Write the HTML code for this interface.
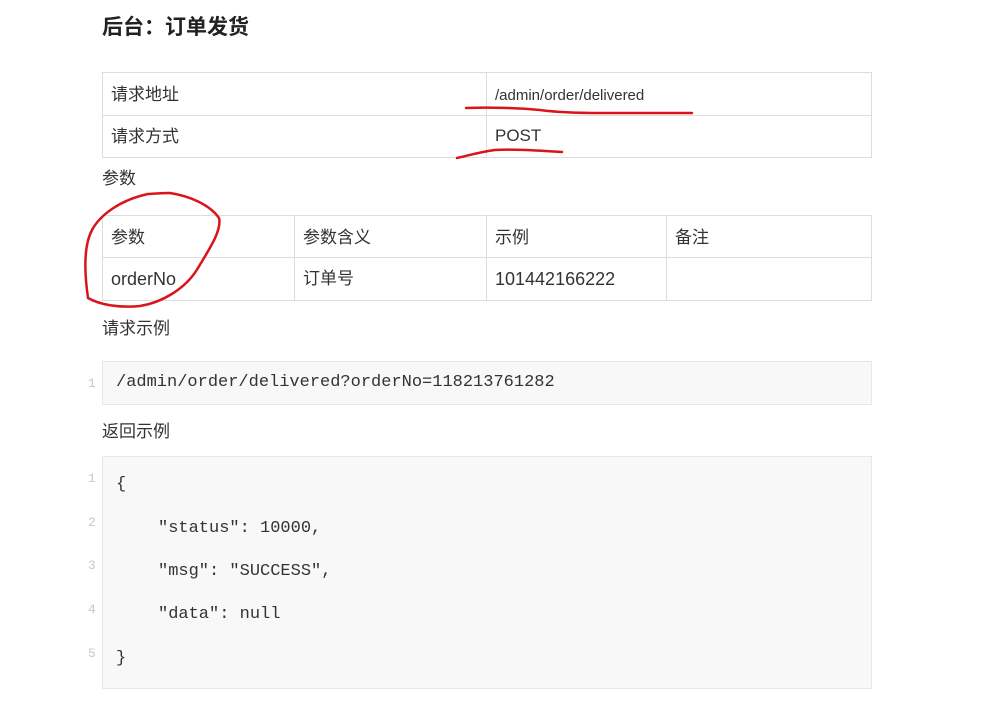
<!DOCTYPE html>
<html><head><meta charset="utf-8"><style>
body{margin:0;width:986px;height:719px;background:#fff;position:relative;overflow:hidden;font-family:"Liberation Sans","Noto Sans CJK SC",sans-serif;color:#333;}
.a{position:absolute;white-space:nowrap;}
.t{font-size:17px;line-height:20px;}
.box{position:absolute;border:1px solid #ddd;box-sizing:border-box;}
.hl{position:absolute;height:1px;background:#ddd;}
.vl{position:absolute;width:1px;background:#ddd;}
.code{position:absolute;background:#f8f8f8;border:1px solid #e7e7e7;box-sizing:border-box;}
.m{font-family:"Liberation Mono","DejaVu Sans Mono",monospace;font-size:17px;color:#333;}
.n{font-family:"Liberation Mono",monospace;font-size:13px;color:#c8c8c8;}
</style></head><body>
<div class="a" style="left:102px;top:11px;font-size:21px;font-weight:bold;color:#222;">后台：订单发货</div>

<div class="box" style="left:102px;top:72px;width:770px;height:86px;"></div>
<div class="hl" style="left:102px;top:115px;width:770px;"></div>
<div class="vl" style="left:486px;top:72px;height:86px;"></div>
<div class="a t" style="left:111px;top:85px;">请求地址</div>
<div class="a" style="left:495px;top:87px;font-size:15px;">/admin/order/delivered</div>
<div class="a t" style="left:111px;top:127px;">请求方式</div>
<div class="a t" style="left:495px;top:126px;">POST</div>

<div class="a t" style="left:102px;top:169px;">参数</div>

<div class="box" style="left:102px;top:215px;width:770px;height:86px;"></div>
<div class="hl" style="left:102px;top:257px;width:770px;"></div>
<div class="vl" style="left:294px;top:215px;height:86px;"></div>
<div class="vl" style="left:486px;top:215px;height:86px;"></div>
<div class="vl" style="left:666px;top:215px;height:86px;"></div>
<div class="a t" style="left:111px;top:228px;">参数</div>
<div class="a t" style="left:303px;top:228px;">参数含义</div>
<div class="a t" style="left:495px;top:228px;">示例</div>
<div class="a t" style="left:675px;top:228px;">备注</div>
<div class="a t" style="left:111px;top:269px;font-size:18px;">orderNo</div>
<div class="a t" style="left:303px;top:269px;">订单号</div>
<div class="a t" style="left:495px;top:269px;font-size:18px;">101442166222</div>

<div class="a t" style="left:102px;top:319px;">请求示例</div>
<div class="code" style="left:102px;top:361px;width:770px;height:44px;"></div>
<div class="a n" style="left:88px;top:376px;">1</div>
<div class="a m" style="left:116px;top:373px;">/admin/order/delivered?orderNo=118213761282</div>

<div class="a t" style="left:102px;top:422px;">返回示例</div>
<div class="code" style="left:102px;top:456px;width:770px;height:233px;"></div>
<div class="a n" style="left:88px;top:471px;">1</div>
<div class="a n" style="left:88px;top:515px;">2</div>
<div class="a n" style="left:88px;top:558px;">3</div>
<div class="a n" style="left:88px;top:602px;">4</div>
<div class="a n" style="left:88px;top:646px;">5</div>
<div class="a m" style="left:116px;top:475px;">{</div>
<div class="a m" style="left:158px;top:519px;">"status": 10000,</div>
<div class="a m" style="left:158px;top:562px;">"msg": "SUCCESS",</div>
<div class="a m" style="left:158px;top:605px;">"data": null</div>
<div class="a m" style="left:116px;top:649px;">}</div>

<svg class="a" style="left:0;top:0" width="986" height="719">
<g fill="none" stroke="#d9141b" stroke-width="2.5" stroke-linecap="round">
<path d="M466 108 C490 107 520 108 540 110 C555 112 570 113 600 113 L692 113"/>
<path d="M457 158 C470 155 480 152 495 150 C510 149 530 150 562 152"/>
<path d="M148 194 C120 200 100 215 92 230 C84 245 84 270 88 298 C100 305 120 308 140 306 C160 303 185 290 198 268 C210 248 222 230 219 218 C210 205 190 196 170 193 C160 193 152 194 148 194"/>
</g>
</svg>
</body></html>
